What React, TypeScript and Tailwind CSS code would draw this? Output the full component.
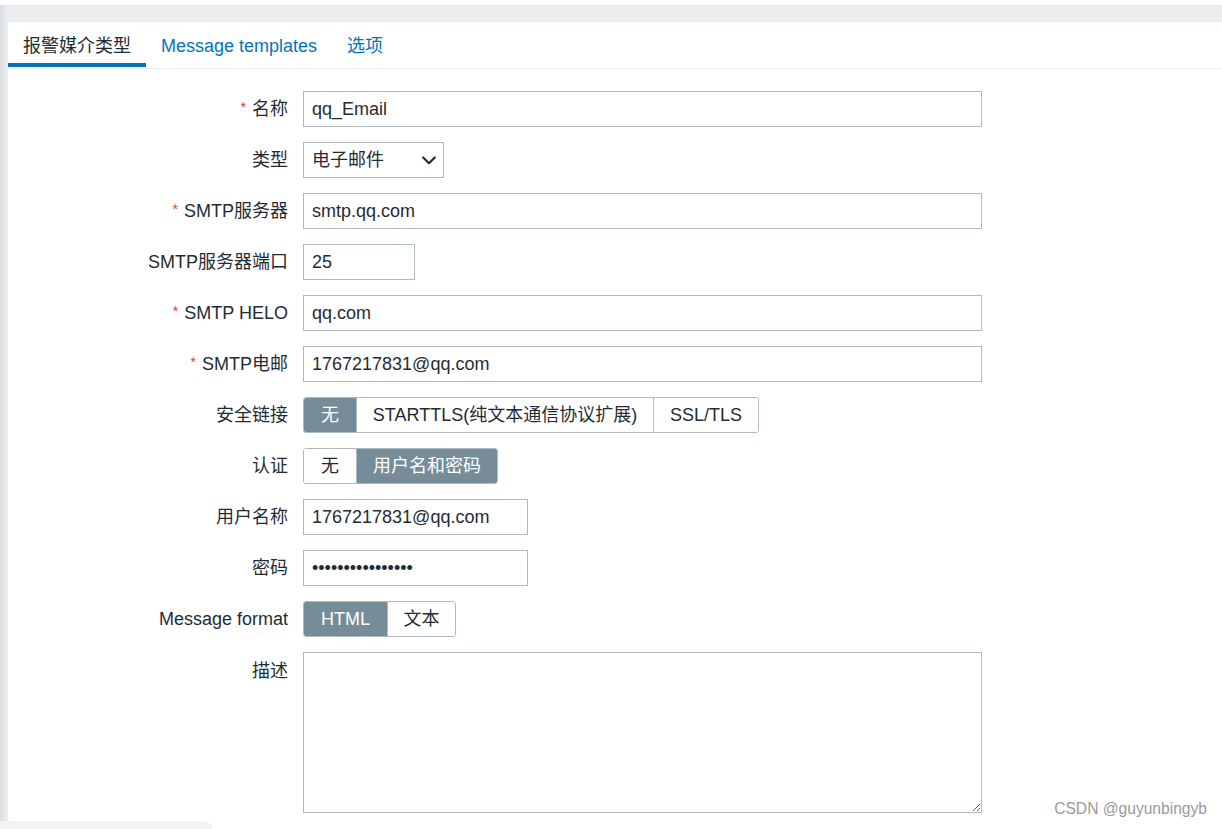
import React from 'react';

const font = { fontFamily: '"Liberation Sans", Arial, "Noto Sans CJK SC", sans-serif' };

function Label({ text, required, top }: { text: string; required?: boolean; top?: boolean }) {
  return (
    <div className={`w-[280px] shrink-0 text-right text-[18px] text-[#1f2c33] ${top ? 'self-start pt-[6px]' : ''}`}>
      {required && <span className="text-[#e33734] mr-[6px] text-[14px] align-[3px]">*</span>}
      {text}
    </div>
  );
}

function Field({ value, width }: { value: string; width: string }) {
  return (
    <div className={`${width} h-[36px] border border-[#acbbc2] bg-white px-[8px] flex items-center text-[18px] text-[#1f2c33]`}>
      {value}
    </div>
  );
}

function Segmented({ options, active, widths }: { options: string[]; active: number; widths: string[] }) {
  return (
    <div className="flex h-[36px] border border-[#acbbc2] rounded-[3px] overflow-hidden">
      {options.map((o, i) => (
        <div
          key={o}
          className={`${widths[i]} flex items-center justify-center text-[18px] ${
            i > 0 ? 'border-l border-[#acbbc2]' : ''
          } ${i === active ? 'bg-[#768d99] text-white' : 'bg-white text-[#1f2c33]'}`}
        >
          {o}
        </div>
      ))}
    </div>
  );
}

export default function App() {
  return (
    <div style={font} className="w-[1222px] h-[829px] bg-[#f8f9fa] overflow-hidden relative">
      <div className="h-[6px] bg-white border-b border-[#e2e6e9]" />
      <div className="flex h-[823px]">
        <div className="w-[8px] shrink-0 bg-gradient-to-r from-[#d9dee2] to-[#eef0f2]" />
        <div className="flex-1 flex flex-col bg-[#ebeef0]">
          <div className="h-[15px]" />
          <div className="flex-1 bg-white border-t border-[#e2e6e9]">
            {/* tabs */}
            <div className="flex h-[47px] border-b border-[#ebeef0] text-[18px]">
              <div className="relative px-[15px] pt-[2px] flex items-center text-[#1f2c33]">
                报警媒介类型
                <div className="absolute left-0 right-0 bottom-[1px] h-[4px] bg-[#0275b8]" />
              </div>
              <div className="px-[15px] pt-[2px] flex items-center text-[#0275b8]">Message templates</div>
              <div className="px-[15px] pt-[2px] flex items-center text-[#0275b8]">选项</div>
            </div>

            {/* form */}
            <div className="pt-[22px] flex flex-col gap-[15px]">
              <div className="flex items-center gap-[15px]">
                <Label text="名称" required />
                <Field value="qq_Email" width="w-[679px]" />
              </div>
              <div className="flex items-center gap-[15px]">
                <Label text="类型" />
                <div className="w-[141px] h-[36px] border border-[#acbbc2] bg-white pl-[8px] pr-[4px] flex items-center justify-between text-[18px] text-[#1f2c33]">
                  电子邮件
                  <svg width="20" height="20" viewBox="0 0 24 24" fill="none" stroke="#1f2c33" strokeWidth="2.6" strokeLinecap="round" strokeLinejoin="round">
                    <path d="M5 9l7 7 7-7" />
                  </svg>
                </div>
              </div>
              <div className="flex items-center gap-[15px]">
                <Label text="SMTP服务器" required />
                <Field value="smtp.qq.com" width="w-[679px]" />
              </div>
              <div className="flex items-center gap-[15px]">
                <Label text="SMTP服务器端口" />
                <Field value="25" width="w-[112px]" />
              </div>
              <div className="flex items-center gap-[15px]">
                <Label text="SMTP HELO" required />
                <Field value="qq.com" width="w-[679px]" />
              </div>
              <div className="flex items-center gap-[15px]">
                <Label text="SMTP电邮" required />
                <Field value="1767217831@qq.com" width="w-[679px]" />
              </div>
              <div className="flex items-center gap-[15px]">
                <Label text="安全链接" />
                <Segmented
                  options={['无', 'STARTTLS(纯文本通信协议扩展)', 'SSL/TLS']}
                  active={0}
                  widths={['w-[52px]', 'w-[297px]', 'w-[105px]']}
                />
              </div>
              <div className="flex items-center gap-[15px]">
                <Label text="认证" />
                <Segmented options={['无', '用户名和密码']} active={1} widths={['w-[52px]', 'w-[141px]']} />
              </div>
              <div className="flex items-center gap-[15px]">
                <Label text="用户名称" />
                <Field value="1767217831@qq.com" width="w-[225px]" />
              </div>
              <div className="flex items-center gap-[15px]">
                <Label text="密码" />
                <Field value="••••••••••••••••" width="w-[225px]" />
              </div>
              <div className="flex items-center gap-[15px]">
                <Label text="Message format" />
                <Segmented options={['HTML', '文本']} active={0} widths={['w-[83px]', 'w-[68px]']} />
              </div>
              <div className="flex items-center gap-[15px]">
                <Label text="描述" top />
                <textarea
                  readOnly
                  className="w-[679px] h-[161px] border border-[#acbbc2] bg-white outline-none resize"
                />
              </div>
            </div>
          </div>
        </div>
      </div>

      <div className="absolute left-0 bottom-[-6px] w-[212px] h-[14px] bg-[#f3f3f3] rounded-tr-[8px]" />
      <div className="absolute right-[15px] bottom-[9px] text-[15.6px] text-[#9a9a9a]">CSDN @guyunbingyb</div>
    </div>
  );
}
